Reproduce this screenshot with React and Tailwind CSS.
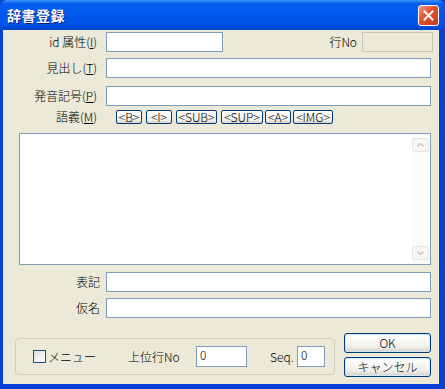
import React from 'react'

const font = "font-['MS_UI_Gothic','Noto_Sans_CJK_JP',sans-serif]"

function Label({ children, className = '' }) {
  return (
    <div className={`w-[94px] shrink-0 text-right text-[12px] leading-none text-black whitespace-nowrap ${className}`}>
      {children}
    </div>
  )
}

function Field({ className = '', value = '' }) {
  return (
    <div className={`shrink-0 h-[20px] border border-[#7F9DB9] bg-white text-[12px] leading-[18px] pl-[3px] ${className}`}>
      {value}
    </div>
  )
}

function TagButton({ children, w }) {
  return (
    <div
      className={`${w} h-[14px] shrink-0 flex items-center justify-center rounded-[2px] border border-[#003C74] bg-[linear-gradient(to_bottom,#FFFFFF,#ECEBE6_80%,#D6D0C5)] text-[12px] leading-none text-black whitespace-nowrap`}
    >
      {children}
    </div>
  )
}

function XpButton({ children }) {
  return (
    <div className="w-[87px] h-[20px] flex items-center justify-center rounded-[3px] border border-[#003C74] bg-[linear-gradient(to_bottom,#FFFFFF,#F0F0EA_70%,#D6D0C5)] text-[12px] leading-none text-black shadow-[inset_0_0_0_1px_#CEE7FF] whitespace-nowrap">
      {children}
    </div>
  )
}

export default function App() {
  return (
    <div className={`w-[445px] h-[389px] flex flex-col bg-[#0841D8] ${font}`}>
      {/* title bar */}
      <div className="h-[30px] shrink-0 flex items-center justify-between pl-[7px] pr-[6px] rounded-t-[7px] bg-[linear-gradient(to_bottom,#3D95FF_0%,#0A5EF0_12%,#0058EE_40%,#0055E8_80%,#0043C9_100%)]">
        <span className="text-white font-bold text-[14px] leading-none tracking-[0.5px] [text-shadow:1px_1px_0_#0A1883]">辞書登録</span>
        <div className="w-[21px] h-[21px] rounded-[3px] border border-white bg-[linear-gradient(135deg,#F19A7C,#E0502D_45%,#C4381A)] flex items-center justify-center">
          <svg width="11" height="11" viewBox="0 0 11 11">
            <path d="M1.5 1.5 L9.5 9.5 M9.5 1.5 L1.5 9.5" stroke="white" strokeWidth="2" strokeLinecap="square" />
          </svg>
        </div>
      </div>

      {/* body */}
      <div className="flex-1 ml-[3px] mr-[6px] mb-[5px] bg-[#ECE9D8] flex flex-col font-light">
        {/* id row */}
        <div className="mt-[2px] h-[20px] flex items-center">
          <Label>id 属性(<span className="underline">I</span>)</Label>
          <Field className="ml-[9px] w-[117px]" />
          <div className="ml-auto text-[12px] leading-none whitespace-nowrap">行No</div>
          <div className="ml-[5px] mr-[6px] w-[71px] h-[20px] border border-[#C9C7BA] bg-[#ECE9D8]" />
        </div>

        <div className="mt-[6px] h-[20px] flex items-center">
          <Label>見出し(<span className="underline">T</span>)</Label>
          <Field className="ml-[9px] w-[325px]" />
        </div>

        <div className="mt-[8px] h-[20px] flex items-center">
          <Label>発音記号(<span className="underline">P</span>)</Label>
          <Field className="ml-[9px] w-[325px]" />
        </div>

        <div className="mt-[4px] h-[14px] flex items-center">
          <Label>語義(<span className="underline">M</span>)</Label>
          <div className="ml-[19px] flex gap-[4px]">
            <TagButton w="w-[26px]">&lt;B&gt;</TagButton>
            <TagButton w="w-[26px]">&lt;I&gt;</TagButton>
            <TagButton w="w-[41px]">&lt;SUB&gt;</TagButton>
            <div className="flex gap-[2px]">
              <TagButton w="w-[42px]">&lt;SUP&gt;</TagButton>
              <TagButton w="w-[26px]">&lt;A&gt;</TagButton>
              <TagButton w="w-[40px]">&lt;IMG&gt;</TagButton>
            </div>
          </div>
        </div>

        {/* textarea */}
        <div className="mt-[9px] ml-[16px] w-[412px] h-[132px] border border-[#7F9DB9] bg-white flex justify-end">
          <div className="w-[17px] mr-[1px] flex flex-col justify-between py-[4px] bg-[#FBFBF8]">
            <div className="h-[14px] rounded-[2px] border border-[#E8E6DC] bg-[#F7F6F2] flex items-center justify-center">
              <svg width="7" height="4" viewBox="0 0 7 4"><path d="M0.5 3.5 L3.5 0.5 L6.5 3.5" stroke="#C9C7BA" fill="none" strokeWidth="1.3" /></svg>
            </div>
            <div className="h-[14px] rounded-[2px] border border-[#E8E6DC] bg-[#F7F6F2] flex items-center justify-center">
              <svg width="7" height="4" viewBox="0 0 7 4"><path d="M0.5 0.5 L3.5 3.5 L6.5 0.5" stroke="#C9C7BA" fill="none" strokeWidth="1.3" /></svg>
            </div>
          </div>
        </div>

        <div className="mt-[7px] h-[20px] flex items-center">
          <Label className="w-[97px]">表記</Label>
          <Field className="ml-[6px] w-[325px]" />
        </div>

        <div className="mt-[6px] h-[20px] flex items-center">
          <Label className="w-[97px]">仮名</Label>
          <Field className="ml-[6px] w-[325px]" />
        </div>

        {/* bottom */}
        <div className="mt-[15px] flex items-start">
          <div className="mt-[5px] ml-[12px] w-[320px] h-[37px] shrink-0 rounded-[4px] border border-[#D0D0BF] flex items-center whitespace-nowrap">
            <div className="ml-[17px] shrink-0 w-[13px] h-[13px] border border-[#1C5180] bg-[linear-gradient(135deg,#DCDCD7,#FFFFFF)]" />
            <span className="ml-[2px] w-[42px] shrink-0 text-[12px] leading-none">メニュー</span>
            <span className="ml-[38px] w-[52px] shrink-0 text-[12px] leading-none">上位行No</span>
            <div className="ml-[16px] shrink-0 w-[51px] h-[21px] border border-[#7F9DB9] bg-white text-[12px] leading-[16px] pl-[3px]">0</div>
            <span className="ml-[23px] w-[24px] shrink-0 text-[12px] leading-none">Seq.</span>
            <div className="ml-[3px] shrink-0 w-[28px] h-[21px] border border-[#7F9DB9] bg-white text-[12px] leading-[16px] pl-[3px]">0</div>
          </div>
          <div className="ml-[9px] flex flex-col gap-[4px]">
            <XpButton>OK</XpButton>
            <XpButton>キャンセル</XpButton>
          </div>
        </div>
      </div>
    </div>
  )
}
